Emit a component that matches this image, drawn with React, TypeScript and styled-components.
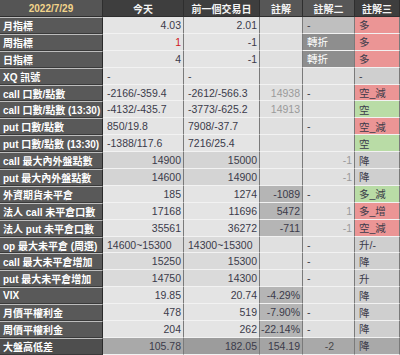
import React from "react";
import styled, { createGlobalStyle } from "styled-components";

const Global = createGlobalStyle`
  html, body { margin: 0; padding: 0; background: #ffffff; }
  body { font-family: "Liberation Sans", Arial, "Noto Sans CJK TC", sans-serif; }
`;

const Table = styled.div`
  display: grid;
  grid-template-columns: 103px 81px 76px 43px 52px 45px;
  grid-template-rows: 17px;
  grid-auto-rows: 16.9px;
  width: 400px;
  height: 355px;
  overflow: hidden;
  background: #6a6a6a;
  font-size: 10.5px;
`;

const HeadCell = styled.div<{ $tone: "date" | "dark" | "mid" }>`
  box-sizing: border-box;
  display: flex;
  align-items: center;
  justify-content: center;
  background: ${(p) => (p.$tone === "mid" ? "#575757" : p.$tone === "date" ? "#555555" : "#3e3e3e")};
  color: ${(p) => (p.$tone === "date" ? "#f2d48a" : "#f4f4f4")};
  font-size: 10px;
  font-weight: bold;
  border-right: 1px solid #2e2e2e;
  border-bottom: 1px solid #2e2e2e;
  white-space: nowrap;
  overflow: hidden;
`;

const LabelCell = styled.div<{ $last?: boolean }>`
  box-sizing: border-box;
  display: flex;
  align-items: center;
  padding-left: 3px;
  background: ${(p) => (p.$last ? "#4e4e4e" : "#595959")};
  color: #ffffff;
  font-size: 10px;
  font-weight: bold;
  border-right: 1px solid #2a2a2a;
  border-top: 1px solid #bdbdbd;
  border-bottom: 1px solid #3a3a3a;
  white-space: nowrap;
  overflow: hidden;
`;

type Align = "l" | "r" | "c";

const Cell = styled.div<{ $bg: string; $align: Align; $fg: string }>`
  box-sizing: border-box;
  display: flex;
  align-items: center;
  justify-content: ${(p) => (p.$align === "r" ? "flex-end" : p.$align === "c" ? "center" : "flex-start")};
  padding: 0 2px 0 4px;
  background: ${(p) => p.$bg};
  color: ${(p) => p.$fg};
  border-right: 1px solid #7a7a7a;
  border-bottom: 1px solid #f2f2f2;
  white-space: nowrap;
  overflow: hidden;
`;

type C = { t: string; a?: Align; bg?: string; fg?: string };

const PINK = "#eb9595";
const GREEN = "#b9dca6";
const SIG = "#cfcfcf";
const NOTE = "#b5b5b5";
const FG = "#3b3b4a";
const MUTED = "#9a9a9a";

type Row = { label: string; base: string; cells: C[]; last?: boolean };

const L = "#e4e4e4";
const D = "#d4d4d4";
const E = "#dadada";

const rows: Row[] = [
  { label: "月指標", base: L, cells: [{ t: "4.03", a: "r" }, { t: "2.01", a: "r" }, { t: "" }, { t: "-", a: "l", bg: "#bfbfbf" }, { t: "多", bg: PINK }] },
  { label: "周指標", base: L, cells: [{ t: "1", a: "r", fg: "#d01818" }, { t: "-1", a: "r" }, { t: "" }, { t: "轉折", bg: "#8e8e8e", fg: "#ffffff" }, { t: "多", bg: PINK }] },
  { label: "日指標", base: L, cells: [{ t: "4", a: "r" }, { t: "-1", a: "r" }, { t: "" }, { t: "轉折", bg: "#8e8e8e", fg: "#ffffff" }, { t: "多", bg: PINK }] },
  { label: "XQ 訊號", base: L, cells: [{ t: "-" }, { t: "-" }, { t: "" }, { t: "" }, { t: "-", bg: SIG }] },
  { label: "call 口數/點數", base: L, cells: [{ t: "-2166/-359.4" }, { t: "-2612/-566.3" }, { t: "14938", a: "r", fg: MUTED }, { t: "-" }, { t: "空_減", bg: PINK }] },
  { label: "call 口數/點數 (13:30)", base: L, cells: [{ t: "-4132/-435.7" }, { t: "-3773/-625.2" }, { t: "14913", a: "r", fg: MUTED }, { t: "" }, { t: "空", bg: GREEN }] },
  { label: "put 口數/點數", base: L, cells: [{ t: "850/19.8" }, { t: "7908/-37.7" }, { t: "" }, { t: "-" }, { t: "空_減", bg: PINK }] },
  { label: "put 口數/點數 (13:30)", base: L, cells: [{ t: "-1388/117.6" }, { t: "7216/25.4" }, { t: "" }, { t: "" }, { t: "空", bg: GREEN }] },
  { label: "call 最大內外盤點數", base: D, cells: [{ t: "14900", a: "r" }, { t: "15000", a: "r" }, { t: "" }, { t: "-1", a: "r", fg: MUTED }, { t: "降", bg: SIG }] },
  { label: "put 最大內外盤點數", base: D, cells: [{ t: "14600", a: "r" }, { t: "14900", a: "r" }, { t: "" }, { t: "-1", a: "r", fg: MUTED }, { t: "降", bg: SIG }] },
  { label: "外資期貨未平倉", base: L, cells: [{ t: "185", a: "r" }, { t: "1274", a: "r" }, { t: "-1089", a: "r", bg: NOTE }, { t: "-" }, { t: "多_減", bg: GREEN }] },
  { label: "法人 call 未平倉口數", base: L, cells: [{ t: "17168", a: "r" }, { t: "11696", a: "r" }, { t: "5472", a: "r", bg: NOTE }, { t: "1", a: "r", fg: MUTED }, { t: "多_增", bg: PINK }] },
  { label: "法人 put 未平倉口數", base: L, cells: [{ t: "35561", a: "r" }, { t: "36272", a: "r" }, { t: "-711", a: "r", bg: NOTE }, { t: "-1", a: "r", fg: MUTED }, { t: "空_減", bg: PINK }] },
  { label: "op 最大未平倉 (周選)", base: E, cells: [{ t: "14600~15300" }, { t: "14300~15300" }, { t: "" }, { t: "-", a: "l" }, { t: "升/-", bg: SIG }] },
  { label: "call 最大未平倉增加", base: E, cells: [{ t: "15250", a: "r" }, { t: "15300", a: "r" }, { t: "" }, { t: "-" }, { t: "降", bg: SIG }] },
  { label: "put 最大未平倉增加", base: E, cells: [{ t: "14750", a: "r" }, { t: "14300", a: "r" }, { t: "" }, { t: "-" }, { t: "升", bg: SIG }] },
  { label: "VIX", base: L, cells: [{ t: "19.85", a: "r" }, { t: "20.74", a: "r" }, { t: "-4.29%", a: "r", bg: NOTE }, { t: "" }, { t: "降", bg: SIG }] },
  { label: "月價平權利金", base: L, cells: [{ t: "478", a: "r" }, { t: "519", a: "r" }, { t: "-7.90%", a: "r", bg: NOTE }, { t: "-" }, { t: "降", bg: SIG }] },
  { label: "周價平權利金", base: L, cells: [{ t: "204", a: "r" }, { t: "262", a: "r" }, { t: "-22.14%", a: "r", bg: NOTE }, { t: "-" }, { t: "降", bg: SIG }] },
  { label: "大盤高低差", base: "#a9a9a9", last: true, cells: [{ t: "105.78", a: "r" }, { t: "182.05", a: "r", bg: "#9c9c9c" }, { t: "154.19", a: "r", bg: "#a4a4a4" }, { t: "-2", a: "c", fg: "#4a4a4a" }, { t: "降", bg: "#a9a9a9" }] },
];

const headers: { t: string; tone: "date" | "dark" | "mid" }[] = [
  { t: "2022/7/29", tone: "date" },
  { t: "今天", tone: "dark" },
  { t: "前一個交易日", tone: "dark" },
  { t: "註解", tone: "mid" },
  { t: "註解二", tone: "mid" },
  { t: "註解三", tone: "dark" },
];

export default function App() {
  return (
    <>
      <Global />
      <Table>
        {headers.map((h) => (
          <HeadCell key={h.t} $tone={h.tone}>{h.t}</HeadCell>
        ))}
        {rows.map((r) => (
          <React.Fragment key={r.label}>
            <LabelCell $last={r.last}>{r.label}</LabelCell>
            {r.cells.map((c, i) => (
              <Cell
                key={i}
                $bg={c.bg ?? (i >= 2 && !r.last ? "#e0e0e0" : r.base)}
                $align={c.a ?? "l"}
                $fg={c.fg ?? FG}
              >
                {c.t}
              </Cell>
            ))}
          </React.Fragment>
        ))}
      </Table>
    </>
  );
}
